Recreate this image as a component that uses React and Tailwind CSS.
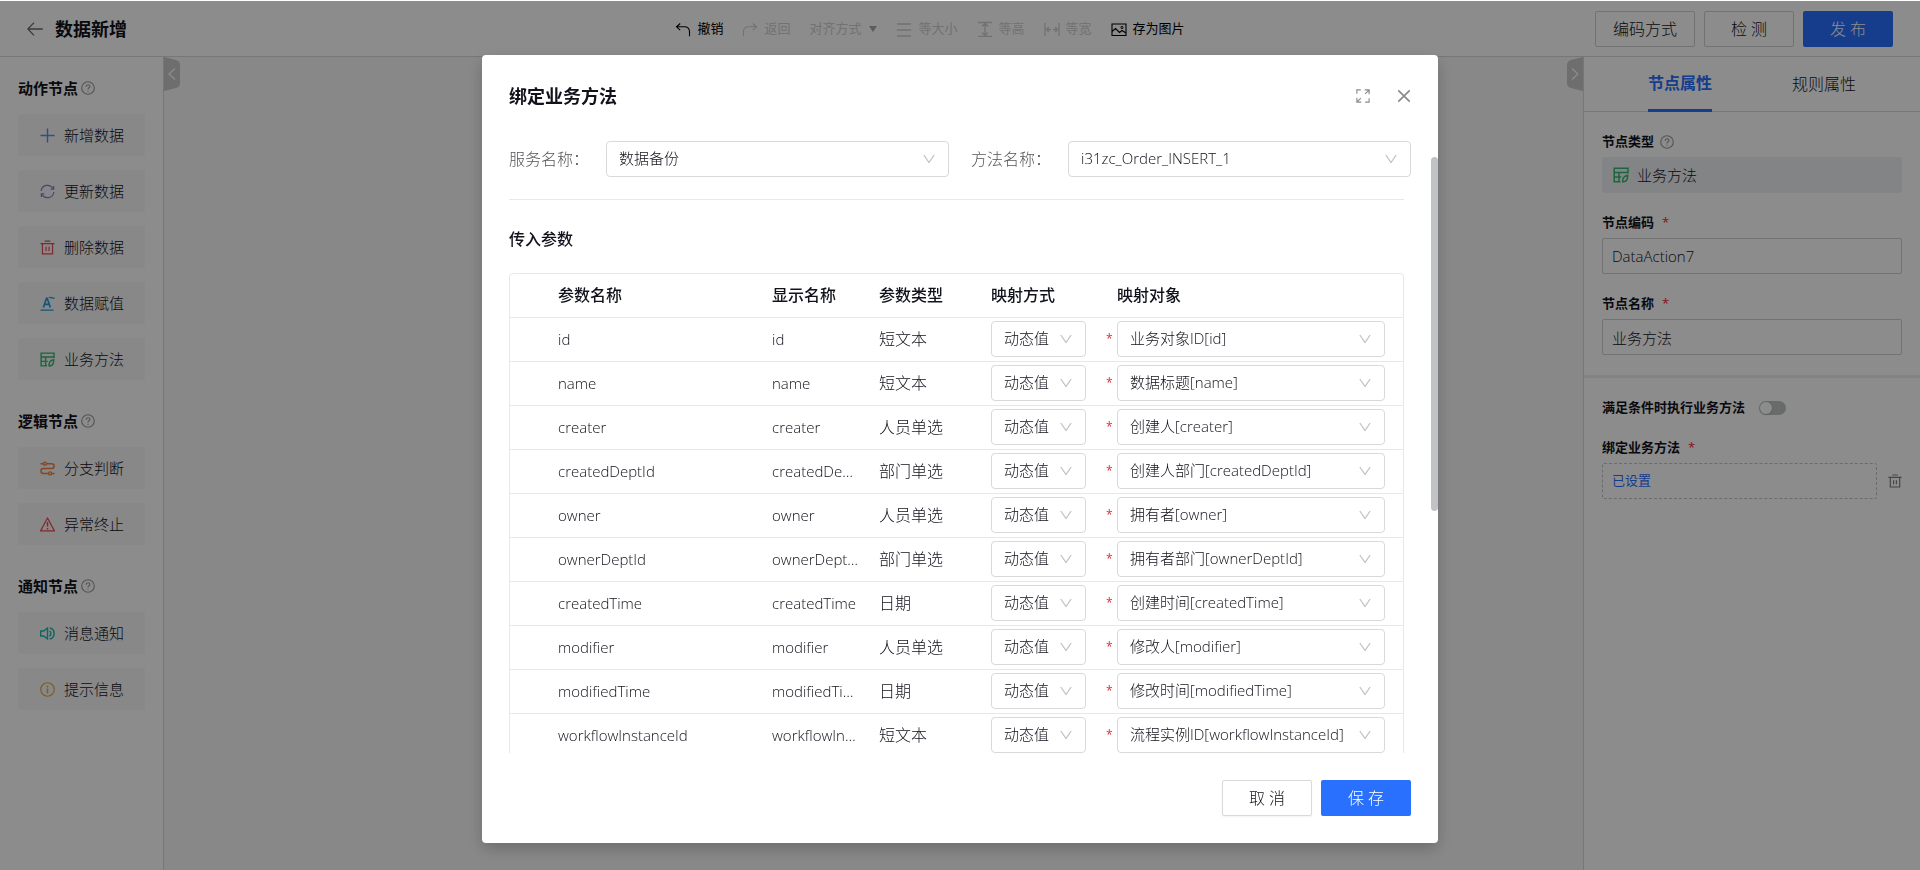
import React, { useState } from "react";

const SIDEBAR_GROUPS = [
  {
    title: "动作节点",
    items: [
      { label: "新增数据", icon: "plus", color: "text-[#5b8ff0]" },
      { label: "更新数据", icon: "sync", color: "text-[#8f78dc]" },
      { label: "删除数据", icon: "trash", color: "text-[#ea4a56]" },
      { label: "数据赋值", icon: "assign", color: "text-[#1e9fe0]" },
      { label: "业务方法", icon: "method", color: "text-[#33b871]" },
    ],
  },
  {
    title: "逻辑节点",
    items: [
      { label: "分支判断", icon: "branch", color: "text-[#f08445]" },
      { label: "异常终止", icon: "warning", color: "text-[#ea4a56]" },
    ],
  },
  {
    title: "通知节点",
    items: [
      { label: "消息通知", icon: "speaker", color: "text-[#1cb8b0]" },
      { label: "提示信息", icon: "info", color: "text-[#e8a93c]" },
    ],
  },
];

const TOOLBAR = [
  { label: "撤销", icon: "undo" },
  { label: "返回", icon: "redo", disabled: true },
  { label: "对齐方式", caret: true, disabled: true },
  { label: "等大小", icon: "lines", disabled: true },
  { label: "等高", icon: "sameHeight", disabled: true },
  { label: "等宽", icon: "sameWidth", disabled: true },
  { label: "存为图片", icon: "picture" },
];

const PARAMS = [
  { name: "id", type: "短文本", target: "业务对象ID[id]" },
  { name: "name", type: "短文本", target: "数据标题[name]" },
  { name: "creater", type: "人员单选", target: "创建人[creater]" },
  { name: "createdDeptId", type: "部门单选", target: "创建人部门[createdDeptId]" },
  { name: "owner", type: "人员单选", target: "拥有者[owner]" },
  { name: "ownerDeptId", type: "部门单选", target: "拥有者部门[ownerDeptId]" },
  { name: "createdTime", type: "日期", target: "创建时间[createdTime]" },
  { name: "modifier", type: "人员单选", target: "修改人[modifier]" },
  { name: "modifiedTime", type: "日期", target: "修改时间[modifiedTime]" },
  { name: "workflowInstanceId", type: "短文本", target: "流程实例ID[workflowInstanceId]" },
];

const ICONS = {
  plus: <path d="M8 .5v15M.5 8h15" strokeWidth="1.5" />,
  sync: (
    <>
      <path d="M1.200 7.500A6.900 6.900 0 0 1 14 4.800M14.800 8.500A6.900 6.900 0 0 1 2 11.200" />
      <path d="M14.600 2.200v3.200h-3.200M1.400 13.800v-3.200h3.200" />
    </>
  ),
  trash: (
    <>
      <path d="M.5 3.800h15M5 1.200h6M2.600 3.800v11h10.800v-11" />
      <path d="M6.400 7.200v4.400M9.600 7.200v4.400" />
    </>
  ),
  assign: (
    <>
      <path d="M3.600 12.200 6.900 2.400h.8L11 12.200M4.800 9h5" strokeWidth="1.800" />
      <path d="M.5 15h14M9.500 2c1.600-2 3 1.200 6 0" />
    </>
  ),
  method: (
    <>
      <path d="M15 6.500V1.200H1.200v13.600h6.300M1.200 5.400H15M1.200 10h7M6 5.400v9.400" strokeWidth="1.500" />
      <path d="M9.800 14.800c-.6-3 1-6 4.800-6.600.2 3.400-1 6.400-3.400 6.400z" strokeWidth="1.500" />
    </>
  ),
  branch: (
    <>
      <path
        d="M.5 2.800h3.200M6.900 2.800h5.500a2.600 2.600 0 0 1 0 5.200H3.600a2.600 2.600 0 0 0 0 5.200h5.600M12.400 13.200h3.200"
        strokeWidth="1.600"
      />
      <circle cx="5.300" cy="2.800" r="1.600" strokeWidth="1.500" />
      <circle cx="10.800" cy="13.200" r="1.600" strokeWidth="1.500" />
    </>
  ),
  warning: (
    <>
      <path d="M8 1 15.400 14.800H.6z" strokeLinejoin="round" />
      <path d="M8 5.200v5M8 11.600v1.600" strokeWidth="1.500" />
    </>
  ),
  speaker: (
    <>
      <path d="M.8 5.400h3L8 2.200v11.600l-4.200-3.200h-3z" strokeWidth="1.500" />
      <path d="M10 5.200c2.200 1 2.200 4.600 0 5.600M10.400 2.200c6.200 1.200 6.200 10.400 0 11.600" strokeWidth="1.500" />
    </>
  ),
  info: (
    <>
      <circle cx="8" cy="8" r="7.200" />
      <path d="M8 4v1.800M8 7v5.200" strokeWidth="1.600" />
    </>
  ),
  help: (
    <>
      <circle cx="8" cy="8" r="7.200" />
      <path d="M5.800 6.600c0-3 4.400-3 4.400-.4C10.200 7.800 8 7.800 8 9.600M8 11v1.200" />
    </>
  ),
  back: <path d="M15.800 8H.8M7 1.600.8 8 7 14.400" />,
  undo: <path d="M5.200 2.500 1.500 5.800l3.700 3.400M1.500 5.800h8c3.200 0 5 2 5 4.600v4.800" strokeWidth="1.100" />,
  redo: <path d="M10.800 2.500l3.700 3.300-3.700 3.400M14.500 5.800h-8c-3.200 0-5 2-5 4.600v4.800" strokeWidth="1.100" />,
  lines: <path d="M1 3h14M1 9h14M1 15h14" />,
  sameHeight: <path d="M1 1.500h14M1 15.500h14M8 2.500v12M5 5.500l3-3 3 3M5 11.500l3 3 3-3" />,
  sameWidth: <path d="M1 2v13M15 2v13M2.500 8.500H7M9 8.500h4.500M4.800 6 2.500 8.500 4.800 11M11.200 6l2.300 2.500-2.300 2.500" />,
  picture: (
    <>
      <path d="M1 3h14v11.500H1zM1 10.500l3.500-3 4 4 2.500-2 4 2.500" strokeWidth="1.100" />
      <circle cx="11" cy="6.500" r="1.100" strokeWidth="1" />
    </>
  ),
  expand: (
    <path d="M1 5.500V1h4.500M10 1h5v5M15 1l-4.500 4.500M15 10.500V15h-4.500M6 15H1v-5M1 15l4.500-4.500" />
  ),
  close: <path d="M1.500 1.500l13 13M14.500 1.500l-13 13" strokeWidth="1.900" />,
};

const Icon = ({ name, className }) => (
  <svg
    viewBox="0 0 16 16"
    fill="none"
    stroke="currentColor"
    strokeWidth="1.3"
    className={`shrink-0 ${className}`}
    aria-hidden="true"
  >
    {ICONS[name]}
  </svg>
);

const SelectBox = ({ id, label, value, className = "" }) => (
  <div className={`relative ${className}`}>
    <select
      id={id}
      aria-label={label}
      defaultValue={value}
      className="block h-9 w-full appearance-none rounded border border-[#d9d9d9] bg-white pr-8 pb-0.5 pl-3 text-[15px] text-[#11121b]"
    >
      <option value={value}>{value}</option>
    </select>
    <svg
      viewBox="0 0 12 10"
      fill="none"
      stroke="#bfbfbf"
      strokeWidth="1.2"
      className="pointer-events-none absolute top-[13px] right-3.5 h-2.5 w-3"
      aria-hidden="true"
    >
      <path d="M.8 1 6 8.500 11.200 1" />
    </svg>
  </div>
);

const CollapseHandle = ({ flip }) => (
  <button
    type="button"
    aria-label={flip ? "展开属性" : "收起节点"}
    className={flip ? "h-[34px] -scale-x-100" : "h-[34px]"}
  >
    <svg viewBox="0 0 16 34" className="h-[34px] w-4" aria-hidden="true">
      <path d="M0 0l12 3q4 1 4 5v18q0 4-4 5L0 34z" fill="#c8c8c8" />
      <path d="M11 11.500 5 17l6 5.500" fill="none" stroke="#fff" strokeWidth="1.200" />
    </svg>
  </button>
);

const FieldLabel = ({ htmlFor, required, children }) => (
  <label
    htmlFor={htmlFor}
    className="flex h-5 items-center text-[13px] font-bold text-[#11121b]"
  >
    {children}
    {required && <span className="ml-2 font-normal text-[#f5222d]">*</span>}
  </label>
);

const Header = () => (
  <header className="flex h-14 items-center justify-between border-b border-[#d9d9d9] bg-white px-[27px]">
    <div className="flex items-center gap-3">
      <button type="button" aria-label="返回上一页">
        <Icon name="back" className="size-4 text-[#6b6b70]" />
      </button>
      <h1 className="text-lg font-bold">数据新增</h1>
    </div>

    <div className="flex items-center gap-[19px] pt-px pl-[138px] text-[13px] font-normal">
      {TOOLBAR.map((tool) => (
        <button
          key={tool.label}
          type="button"
          disabled={tool.disabled}
          className="flex items-center gap-1.5 text-black disabled:text-[#cfcfcf]"
        >
          {tool.icon && <Icon name={tool.icon} className="size-4" />}
          {tool.label}
          {tool.caret && (
            <svg viewBox="0 0 8 6" className="ml-0.5 h-1.5 w-2 text-[#a8a8a8]" aria-hidden="true">
              <path d="M0 0h8L4 6z" fill="currentColor" />
            </svg>
          )}
        </button>
      ))}
    </div>

    <div className="flex gap-[9px] text-base">
      <button type="button" className="h-9 rounded-xs border border-[#d0d0d0] px-[17px]">
        编码方式
      </button>
      <button type="button" className="h-9 w-[90px] rounded-xs border border-[#d0d0d0]">
        检 测
      </button>
      <button type="button" className="h-9 w-[90px] rounded-xs bg-[#2970ff] text-white">
        发 布
      </button>
    </div>
  </header>
);

const Sidebar = () => (
  <aside className="flex w-[164px] flex-col gap-[29px] border-r border-[#d9d9d9] bg-white px-[18px] pt-[19px]">
    {SIDEBAR_GROUPS.map((group) => (
      <section key={group.title}>
        <h2 className="flex h-6 items-center gap-[3px] text-[15px] font-bold">
          {group.title}
          <Icon name="help" className="size-3.5 text-[#9a9a9a]" />
        </h2>
        <div className="mt-3.5 flex flex-col gap-3.5">
          {group.items.map((item) => (
            <button
              key={item.label}
              type="button"
              className="flex h-[42px] items-center gap-[9px] rounded-xs bg-[#f7f7f8] pl-[22px] text-[15px]"
            >
              <Icon name={item.icon} className={`size-[15px] ${item.color}`} />
              {item.label}
            </button>
          ))}
        </div>
      </section>
    ))}
  </aside>
);

const PropertyPanel = () => {
  const [enabled, setEnabled] = useState(false);

  return (
    <aside className="w-[337px] border-l border-[#d9d9d9] bg-white">
      <div className="flex h-[55px] justify-between border-b border-[#d9d9d9] px-16 text-base">
        <button type="button" className="-mb-px border-b-3 border-[#2970ff] font-bold text-[#2970ff]">
          节点属性
        </button>
        <button type="button">规则属性</button>
      </div>

      <div className="flex flex-col gap-5 px-[18px] py-5">
        <div>
          <div className="flex h-5 items-center gap-1.5 text-[13px] font-bold">
            节点类型
            <Icon name="help" className="size-3.5 text-[#9a9a9a]" />
          </div>
          <div className="mt-[5px] flex h-9 items-center gap-2 rounded-xs bg-[#eff1f4] pl-[11px] text-[15px]">
            <Icon name="method" className="size-4 text-[#33b871]" />
            业务方法
          </div>
        </div>
        <div>
          <FieldLabel htmlFor="node-code" required>节点编码</FieldLabel>
          <input
            id="node-code"
            defaultValue="DataAction7"
            className="mt-[5px] h-9 w-full rounded-xs border border-[#d0d0d0] px-[9px] text-[15px]"
          />
        </div>
        <div>
          <FieldLabel htmlFor="node-name" required>节点名称</FieldLabel>
          <input
            id="node-name"
            defaultValue="业务方法"
            className="mt-[5px] h-9 w-full rounded-xs border border-[#d0d0d0] px-[9px] text-[15px]"
          />
        </div>
      </div>

      <div className="h-[3px] bg-[#eeeeee]" />

      <div className="flex flex-col gap-5 px-[18px] py-5">
        <div className="flex items-center gap-3.5">
          <FieldLabel htmlFor="run-if">满足条件时执行业务方法</FieldLabel>
          <span className="relative flex">
            <input
              id="run-if"
              type="checkbox"
              role="switch"
              checked={enabled}
              onChange={(e) => setEnabled(e.target.checked)}
              className="h-3.5 w-[27px] appearance-none rounded-full bg-[#bfc2c2] checked:bg-[#2970ff]"
            />
            <span
              className={`pointer-events-none absolute top-px size-3 rounded-full bg-white shadow ${
                enabled ? "right-px" : "left-px"
              }`}
            />
          </span>
        </div>
        <div>
          <FieldLabel htmlFor="bind-method" required>绑定业务方法</FieldLabel>
          <div className="mt-[5px] flex items-center gap-[11px]">
            <button
              id="bind-method"
              type="button"
              className="h-9 flex-1 rounded-xs border border-dashed border-[#c4c4c4] px-[9px] text-left text-[13px] font-normal text-[#2970ff]"
            >
              已设置
            </button>
            <button type="button" aria-label="删除">
              <Icon name="trash" className="size-3.5 text-[#7d7d82]" />
            </button>
          </div>
        </div>
      </div>
    </aside>
  );
};

const BindMethodModal = () => (
  <div
    role="dialog"
    aria-labelledby="modal-title"
    className="relative flex max-h-full w-[956px] flex-col rounded bg-white pb-[27px] shadow-[0_6px_16px_rgba(0,0,0,0.2)]"
  >
    <div className="flex items-center justify-between px-[27px] pt-[27px]">
      <h2 id="modal-title" className="text-lg font-bold">绑定业务方法</h2>
      <div className="flex items-center gap-[27px] text-[#8a8a8f]">
        <button type="button" aria-label="全屏">
          <Icon name="expand" className="size-3.5" />
        </button>
        <button type="button" aria-label="关闭">
          <Icon name="close" className="size-3.5" />
        </button>
      </div>
    </div>

    <div className="mt-[31px] min-h-0 flex-1 overflow-y-auto px-[27px] [scrollbar-width:none]">
      <div className="flex gap-[22px] text-base text-[#55555a]">
        <div className="flex flex-1 items-center">
          <label htmlFor="service-name" className="w-[97px]">服务名称：</label>
          <SelectBox id="service-name" label="服务名称" value="数据备份" className="flex-1" />
        </div>
        <div className="flex flex-1 items-center">
          <label htmlFor="method-name" className="w-[97px]">方法名称：</label>
          <SelectBox id="method-name" label="方法名称" value="i31zc_Order_INSERT_1" className="flex-1" />
        </div>
      </div>

      <div className="mr-[7px]">
        <hr className="mt-[22px] border-[#e8e8e8]" />
        <h3 className="mt-[27px] text-base font-medium">传入参数</h3>

        <div className="mt-[22px] rounded border border-[#e8e8e8]">
          <table className="w-full table-fixed border-collapse text-base">
            <thead>
              <tr className="h-[43px] border-b border-[#e8e8e8] text-left">
                <th className="w-[253px] pl-12 font-medium">参数名称</th>
                <th className="w-[107px] px-[9px] font-medium">显示名称</th>
                <th className="w-[112px] px-[9px] font-medium">参数类型</th>
                <th className="w-[117px] px-[9px] font-medium">映射方式</th>
                <th className="pl-[18px] font-medium">映射对象</th>
              </tr>
            </thead>
            <tbody>
              {PARAMS.map((param) => (
                <tr key={param.name} className="h-11 border-b border-[#e8e8e8] last:border-b-0">
                  <td className="pl-12 text-[15px]">{param.name}</td>
                  <td className="truncate pr-[11px] pl-[9px] text-[15px]">{param.name}</td>
                  <td className="px-[9px]">{param.type}</td>
                  <td className="pl-[9px]">
                    <SelectBox label={`${param.name} 映射方式`} value="动态值" className="w-[95px]" />
                  </td>
                  <td className="pr-[18px] pl-[7px]">
                    <div className="flex items-center">
                      <span className="w-[11px] text-xs font-normal text-[#f5222d]">*</span>
                      <SelectBox label={`${param.name} 映射对象`} value={param.target} className="flex-1" />
                    </div>
                  </td>
                </tr>
              ))}
            </tbody>
          </table>
        </div>
      </div>
    </div>

    <div className="absolute top-[102px] right-0 h-[354px] w-[7px] rounded-full bg-[#c1c2c5]" />

    <div className="mt-[27px] flex justify-end gap-[9px] px-[27px] text-base">
      <button type="button" className="h-9 w-[90px] rounded-xs border border-[#d9d9d9] shadow-xs">
        取 消
      </button>
      <button type="button" className="h-9 w-[90px] rounded-xs bg-[#2970ff] text-white">
        保 存
      </button>
    </div>
  </div>
);

const App = () => {
  return (
    <div className="flex min-h-screen flex-col bg-white pt-px font-['Open_Sans','Noto_Sans_CJK_SC',sans-serif] font-light text-[#11121b]">
      <Header />
      <main className="flex flex-1 bg-[#f7f7f7]">
        <Sidebar />
        <div className="flex flex-1 items-start justify-between">
          <CollapseHandle />
          <CollapseHandle flip />
        </div>
        <PropertyPanel />
      </main>

      {/* Modal mask */}
      <div className="fixed inset-x-0 top-px bottom-0 flex items-start justify-center bg-black/45 pt-[54px] pb-[27px]">
        <BindMethodModal />
      </div>
    </div>
  );
};

export default App;
